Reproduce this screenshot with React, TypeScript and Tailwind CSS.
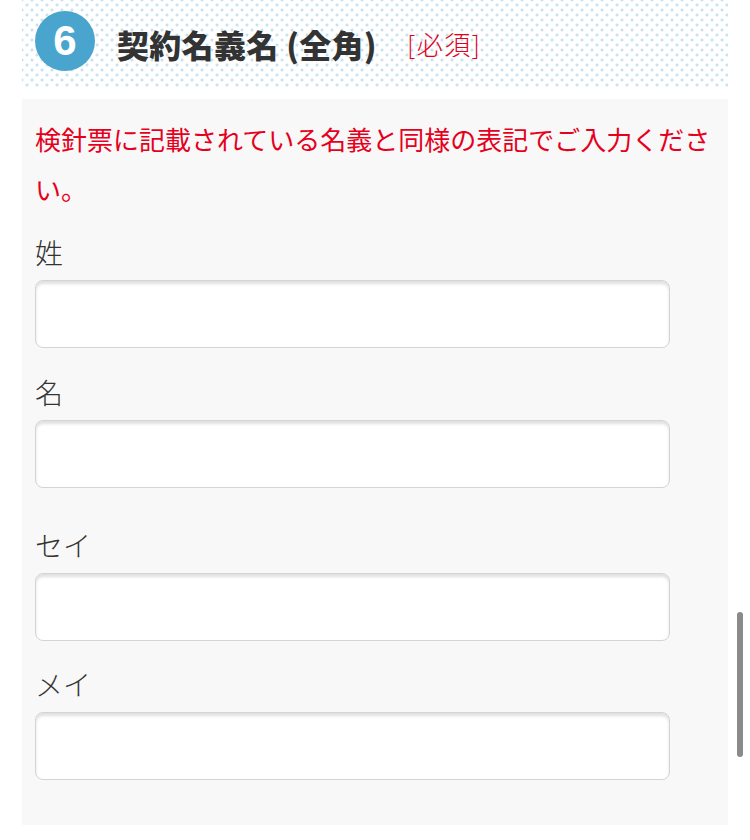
const jp = "font-['Noto_Sans_CJK_JP','Noto_Sans',sans-serif]";

function Field({ label, className = "" }: { label: string; className?: string }) {
  return (
    <div className={className}>
      <label className="block text-[28px] font-light leading-[42px] text-[#333]">{label}</label>
      <input
        type="text"
        className="mt-[7px] block h-[68px] w-[635px] rounded-[8px] border border-[#d4d4d4] bg-white shadow-[inset_0_3px_3px_rgba(0,0,0,0.12)] outline-none"
      />
    </div>
  );
}

export default function App() {
  return (
    <div className={`relative h-[840px] w-[750px] overflow-hidden bg-white ${jp}`}>
      {/* heading band with dotted background */}
      <div className="mx-[22px] flex h-[87px] items-center bg-white bg-[radial-gradient(circle,#c4e2f0_1.2px,transparent_1.8px),radial-gradient(circle,#c4e2f0_1.2px,transparent_1.8px)] bg-[size:10px_10px] bg-[position:0_0,5px_5px] pl-[13px] pb-[6px]">
        <div className="flex h-[60px] w-[60px] items-center justify-center rounded-full bg-[#4aa5ce]">
          <span className="font-['Liberation_Sans',sans-serif] text-[42px] font-bold leading-none text-white">6</span>
        </div>
        <h2 className="ml-[22px] mt-[6px] text-[32px] font-black leading-none tracking-[0.3px] text-[#333]">契約名義名 (全角)</h2>
        <span className="ml-[30px] mt-[6px] text-[26px] font-light leading-none tracking-[1.5px] text-[#e3001b]">[必須]</span>
      </div>

      <div className="mx-[22px] mt-[12px] bg-[#f8f8f8] px-[13px] pb-[45px] pt-[15px]">
        <p className="text-[26px] leading-[50px] text-[#e60020]">
          検針票に記載されている名義と同様の表記でご入力ください。
        </p>
        <Field label="姓" className="mt-[17px]" />
        <Field label="名" className="mt-[23px]" />
        <Field label="セイ" className="mt-[36px]" />
        <Field label="メイ" className="mt-[22px]" />
      </div>

      {/* scroll indicator */}
      <div className="absolute right-[7px] top-[612px] h-[145px] w-[6px] rounded-full bg-[#8a8a8a]" />
    </div>
  );
}
